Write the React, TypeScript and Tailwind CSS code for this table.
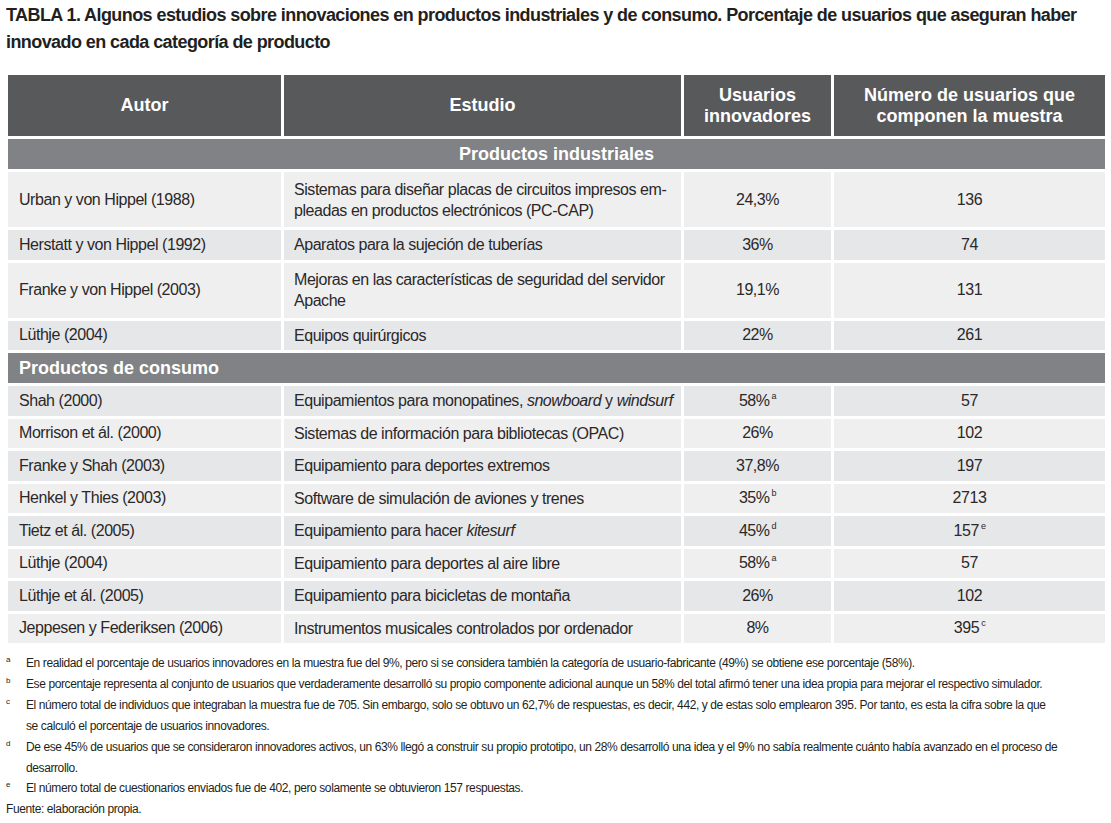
import React from 'react';

type Row = {
  autor: string;
  estudio: React.ReactNode;
  pct: React.ReactNode;
  n: React.ReactNode;
  tall?: boolean;
  light?: boolean;
};

const Sup = ({ children }: { children: React.ReactNode }) => (
  <sup className="text-[9px] ml-[2px] -top-[5px]">{children}</sup>
);

const industriales: Row[] = [
  {
    autor: 'Urban y von Hippel (1988)',
    estudio: (
      <>
        Sistemas para diseñar placas de circuitos impresos em-
        <br />
        pleadas en productos electrónicos (PC-CAP)
      </>
    ),
    pct: '24,3%',
    n: '136',
    tall: true,
    light: true,
  },
  { autor: 'Herstatt y von Hippel (1992)', estudio: 'Aparatos para la sujeción de tuberías', pct: '36%', n: '74' },
  {
    autor: 'Franke y von Hippel (2003)',
    estudio: (
      <>
        Mejoras en las características de seguridad del servidor
        <br />
        Apache
      </>
    ),
    pct: '19,1%',
    n: '131',
    tall: true,
    light: true,
  },
  { autor: 'Lüthje (2004)', estudio: 'Equipos quirúrgicos', pct: '22%', n: '261' },
];

const consumo: Row[] = [
  {
    autor: 'Shah (2000)',
    estudio: (
      <>
        Equipamientos para monopatines, <i>snowboard</i> y <i>windsurf</i>
      </>
    ),
    pct: (
      <>
        58%<Sup>a</Sup>
      </>
    ),
    n: '57',
  },
  { autor: 'Morrison et ál. (2000)', estudio: 'Sistemas de información para bibliotecas (OPAC)', pct: '26%', n: '102', light: true },
  { autor: 'Franke y Shah (2003)', estudio: 'Equipamiento para deportes extremos', pct: '37,8%', n: '197' },
  {
    autor: 'Henkel y Thies (2003)',
    estudio: 'Software de simulación de aviones y trenes',
    pct: (
      <>
        35%<Sup>b</Sup>
      </>
    ),
    n: '2713',
    light: true,
  },
  {
    autor: 'Tietz et ál. (2005)',
    estudio: (
      <>
        Equipamiento para hacer <i>kitesurf</i>
      </>
    ),
    pct: (
      <>
        45%<Sup>d</Sup>
      </>
    ),
    n: (
      <>
        157<Sup>e</Sup>
      </>
    ),
  },
  {
    autor: 'Lüthje (2004)',
    estudio: 'Equipamiento para deportes al aire libre',
    pct: (
      <>
        58%<Sup>a</Sup>
      </>
    ),
    n: '57',
    light: true,
  },
  { autor: 'Lüthje et ál. (2005)', estudio: 'Equipamiento para bicicletas de montaña', pct: '26%', n: '102' },
  {
    autor: 'Jeppesen y Federiksen (2006)',
    estudio: 'Instrumentos musicales controlados por ordenador',
    pct: '8%',
    n: (
      <>
        395<Sup>c</Sup>
      </>
    ),
    light: true,
  },
];

const notas: { mark: string; lines: string[] }[] = [
  {
    mark: 'a',
    lines: [
      'En realidad el porcentaje de usuarios innovadores en la muestra fue del 9%, pero si se considera también la categoría de usuario-fabricante (49%) se obtiene ese porcentaje (58%).',
    ],
  },
  {
    mark: 'b',
    lines: [
      'Ese porcentaje representa al conjunto de usuarios que verdaderamente desarrolló su propio componente adicional aunque un 58% del total afirmó tener una idea propia para mejorar el respectivo simulador.',
    ],
  },
  {
    mark: 'c',
    lines: [
      'El número total de individuos que integraban la muestra fue de 705. Sin embargo, solo se obtuvo un 62,7% de respuestas, es decir, 442, y de estas solo emplearon 395. Por tanto, es esta la cifra sobre la que',
      'se calculó el porcentaje de usuarios innovadores.',
    ],
  },
  {
    mark: 'd',
    lines: [
      'De ese 45% de usuarios que se consideraron innovadores activos, un 63% llegó a construir su propio prototipo, un 28% desarrolló una idea y el 9% no sabía realmente cuánto había avanzado en el proceso de',
      'desarrollo.',
    ],
  },
  {
    mark: 'e',
    lines: ['El número total de cuestionarios enviados fue de 402, pero solamente se obtuvieron 157 respuestas.'],
  },
];

function DataRow({ row }: { row: Row }) {
  const bg = row.light ? 'bg-[#efefef]' : 'bg-[#e6e7e8]';
  const h = row.tall ? 'h-[55px]' : 'h-[29.5px]';
  return (
    <>
      <div className={`${bg} ${h} flex items-center pl-[11px] whitespace-nowrap`}>{row.autor}</div>
      <div className={`${bg} ${h} flex items-center pl-[10px] leading-[21px] whitespace-nowrap`}>
        <div>{row.estudio}</div>
      </div>
      <div className={`${bg} ${h} flex items-center justify-center whitespace-nowrap`}>{row.pct}</div>
      <div className={`${bg} ${h} flex items-center justify-center whitespace-nowrap`}>{row.n}</div>
    </>
  );
}

export default function App() {
  return (
    <div className="w-[1111px] h-[823px] bg-white text-[#231f20] font-['Liberation_Sans',Arial,sans-serif] overflow-hidden">
      {/* Title */}
      <div className="px-[6px] pt-[2px] text-[18px] font-bold leading-[27px] tracking-[-0.58px] whitespace-nowrap">
        <div>
          TABLA 1. Algunos estudios sobre innovaciones en productos industriales y de consumo. Porcentaje de usuarios que aseguran haber
        </div>
        <div>innovado en cada categoría de producto</div>
      </div>

      {/* Table */}
      <div className="mt-[19px] ml-[8px] grid grid-cols-[273px_397px_147px_271px] gap-[3px] text-[16px] tracking-[-0.45px] text-[#2b2829]">
        <div className="h-[61px] bg-[#58595b] text-white font-bold text-[18px] tracking-normal flex items-center justify-center">Autor</div>
        <div className="h-[61px] bg-[#58595b] text-white font-bold text-[18px] tracking-normal flex items-center justify-center">Estudio</div>
        <div className="h-[61px] bg-[#58595b] text-white font-bold text-[18px] tracking-normal flex items-center justify-center text-center leading-[21px]">
          Usuarios
          <br />
          innovadores
        </div>
        <div className="h-[61px] bg-[#58595b] text-white font-bold text-[18px] tracking-normal flex items-center justify-center text-center leading-[21px]">
          Número de usuarios que
          <br />
          componen la muestra
        </div>

        <div className="col-span-4 h-[30px] bg-[#808285] text-white font-bold text-[18px] tracking-normal flex items-center justify-center">
          Productos industriales
        </div>
        {industriales.map((r, i) => (
          <DataRow key={'i' + i} row={r} />
        ))}

        <div className="col-span-4 h-[30px] bg-[#808285] text-white font-bold text-[18px] tracking-normal flex items-center pl-[11px]">
          Productos de consumo
        </div>
        {consumo.map((r, i) => (
          <DataRow key={'c' + i} row={r} />
        ))}
      </div>

      {/* Footnotes */}
      <div className="mt-[10px] px-[6px] text-[12px] leading-[20.9px] tracking-[-0.4px] whitespace-nowrap">
        {notas.map(n => (
          <div key={n.mark} className="flex">
            <span className="w-[20px] shrink-0 text-[8px] leading-[14px] tracking-normal">{n.mark}</span>
            <div>
              {n.lines.map((l, i) => (
                <div key={i}>{l}</div>
              ))}
            </div>
          </div>
        ))}
        <div>Fuente: elaboración propia.</div>
      </div>
    </div>
  );
}
